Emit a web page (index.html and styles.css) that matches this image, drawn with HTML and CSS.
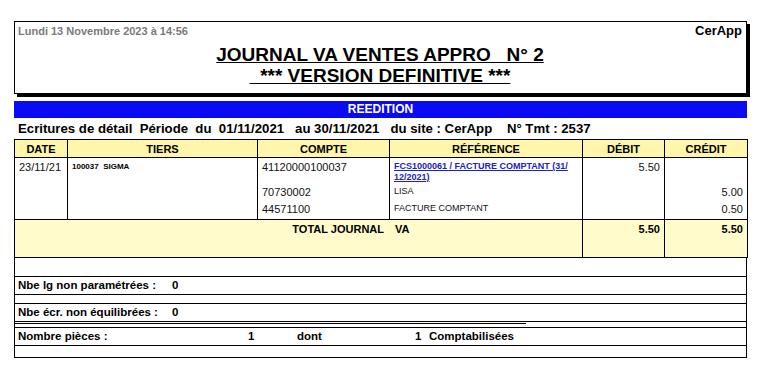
FILE: index.html
```html
<!DOCTYPE html>
<html lang="fr">
<head>
<meta charset="utf-8">
<title>Journal VA Ventes Appro</title>
<link rel="stylesheet" href="styles.css">
</head>
<body>
<div class="page">
  <div class="head-box">
    <div class="head-top">
      <span class="printed">Lundi 13 Novembre 2023 à 14:56</span>
      <span class="site">CerApp</span>
    </div>
    <div class="title1">JOURNAL VA VENTES APPRO&nbsp;&nbsp;&nbsp;N° 2</div>
    <div class="title2">&nbsp;&nbsp;*** VERSION DEFINITIVE ***</div>
  </div>

  <div class="bluebar">REEDITION</div>

  <div class="period">Ecritures de détail&nbsp; Période&nbsp; du&nbsp; 01/11/2021&nbsp;&nbsp; au 30/11/2021&nbsp;&nbsp; du site : CerApp&nbsp;&nbsp;&nbsp; N° Tmt : 2537</div>

  <table class="grid">
    <colgroup>
      <col class="c-date"><col class="c-tiers"><col class="c-compte"><col class="c-ref"><col class="c-debit"><col class="c-credit">
    </colgroup>
    <thead>
      <tr class="hdr">
        <th>DATE</th><th>TIERS</th><th>COMPTE</th><th>RÉFÉRENCE</th><th>DÉBIT</th><th>CRÉDIT</th>
      </tr>
    </thead>
    <tbody>
      <tr class="sub1">
        <td rowspan="3" class="date">23/11/21</td>
        <td rowspan="3" class="tiers">100037&nbsp; SIGMA</td>
        <td class="compte">41120000100037</td>
        <td class="ref"><a class="reflink">FCS1000061 / FACTURE COMPTANT (31/ 12/2021)</a></td>
        <td class="num">5.50</td>
        <td class="num"></td>
      </tr>
      <tr class="sub2">
        <td class="compte">70730002</td>
        <td class="ref lib">LISA</td>
        <td class="num"></td>
        <td class="num">5.00</td>
      </tr>
      <tr class="sub3">
        <td class="compte">44571100</td>
        <td class="ref lib">FACTURE COMPTANT</td>
        <td class="num"></td>
        <td class="num">0.50</td>
      </tr>
      <tr class="total">
        <td colspan="4" class="total-label"><span class="tl-main">TOTAL JOURNAL</span><span class="tl-code">VA</span></td>
        <td class="num strong">5.50</td>
        <td class="num strong">5.50</td>
      </tr>
    </tbody>
  </table>

  <div class="footer">
    <div class="frow empty1"></div>
    <div class="frow stat"><span class="lab-lg">Nbe lg non paramétrées :</span><span>0</span></div>
    <div class="frow gap"></div>
    <div class="frow stat"><span class="lab-lg">Nbe écr. non équilibrées :</span><span>0</span></div>
    <div class="frow dbl"><div class="partial"></div></div>
    <div class="frow stat"><span class="lab-np">Nombre pièces :</span><span class="v1">1</span><span class="dont">dont</span><span class="v2">1</span><span>Comptabilisées</span></div>
    <div class="frow empty2"></div>
  </div>
</div>
</body>
</html>
```
FILE: styles.css
```css
html, body {
  margin: 0;
  padding: 0;
  background: #ffffff;
}
body {
  font-family: "Liberation Sans", Arial, sans-serif;
  color: #000;
}
.page {
  padding: 21px 0 0 14px;
  width: 733px;
}
.head-box {
  box-sizing: border-box;
  height: 73px;
  border: 1px solid #000;
  box-shadow: 3px 3px 0 #000;
  padding: 2px 4px 0 3px;
}
.head-top {
  display: flex;
  justify-content: space-between;
  align-items: center;
  height: 13px;
}
.printed {
  color: #7a7a7a;
  font-weight: bold;
  font-size: 11px;
}
.site {
  font-weight: bold;
  font-size: 13px;
}
.title1, .title2 {
  text-align: center;
  font-weight: bold;
  font-size: 19px;
  text-decoration: underline;
  line-height: 21px;
}
.title1 {
  margin-top: 7px;
}
.bluebar {
  margin-top: 7px;
  height: 17px;
  line-height: 17px;
  background: #0a0af5;
  color: #fff;
  font-weight: bold;
  font-size: 12px;
  text-align: center;
}
.period {
  height: 21px;
  line-height: 21px;
  font-weight: bold;
  font-size: 13.2px;
  padding-left: 4px;
  white-space: nowrap;
}
.grid {
  width: 733px;
  table-layout: fixed;
  border-collapse: collapse;
  font-size: 11px;
}
.c-date { width: 53px; }
.c-tiers { width: 190px; }
.c-compte { width: 132px; }
.c-ref { width: 193px; }
.c-debit { width: 82px; }
.c-credit { width: 83px; }
.grid th, .grid td {
  border-left: 1px solid #000;
  border-right: 1px solid #000;
  padding: 0 4px;
}
.hdr th {
  background: #fff6ac;
  border: 1px solid #000;
  height: 17px;
  padding: 0;
  font-size: 11px;
  font-weight: bold;
  text-align: center;
  vertical-align: middle;
}
.grid td {
  vertical-align: top;
}
.sub1 td { height: 26px; padding-top: 3px; box-sizing: border-box; }
.sub2 td { height: 17px; box-sizing: border-box; padding-top: 2px; }
.sub3 td { height: 19px; box-sizing: border-box; padding-top: 2px; }
.sub3 td, .grid td.date, .grid td.tiers {
  border-bottom: 1px solid #000;
}
.date {
  padding-top: 3px;
  color: #111;
}
.tiers {
  font-size: 8px;
  font-weight: bold;
  padding-top: 4px !important;
}
.compte {
  color: #111;
}
.ref {
  font-size: 9px;
}
.reflink {
  color: #1a22c8;
  font-weight: bold;
  text-decoration: underline;
  display: block;
  width: 182px;
  line-height: 10.5px;
}
.lib {
  color: #111;
}
.num {
  text-align: right;
  color: #111;
}
.total td {
  background: #fffbca;
  height: 38px;
  box-sizing: border-box;
  border-bottom: 1px solid #000;
  padding-top: 3px;
  font-weight: bold;
}
.grid td.total-label {
  padding-left: 0;
}
.tl-main {
  display: inline-block;
  width: 380px;
  text-align: right;
  padding-right: 11px;
  box-sizing: border-box;
}
.tl-code {
  display: inline-block;
}
.strong {
  color: #000;
}
.footer {
  border-left: 1px solid #000;
  border-right: 1px solid #000;
  width: 731px;
  font-size: 11.5px;
  font-weight: bold;
}
.frow {
  border-bottom: 1px solid #000;
  box-sizing: content-box;
}
.empty1 { height: 18px; }
.stat {
  height: 17px;
  line-height: 17px;
  padding-left: 3px;
  white-space: nowrap;
}
.gap { height: 8px; }
.dbl {
  height: 4px;
  padding-top: 1px;
  box-sizing: content-box;
}
.partial {
  width: 511px;
  border-top: 1px solid #000;
}
.empty2 { height: 11px; }
.lab-lg {
  display: inline-block;
  width: 154px;
}
.lab-np {
  display: inline-block;
  width: 230px;
}
.v1 {
  display: inline-block;
  width: 49px;
}
.dont {
  display: inline-block;
  width: 118px;
}
.v2 {
  display: inline-block;
  width: 14px;
}
```
